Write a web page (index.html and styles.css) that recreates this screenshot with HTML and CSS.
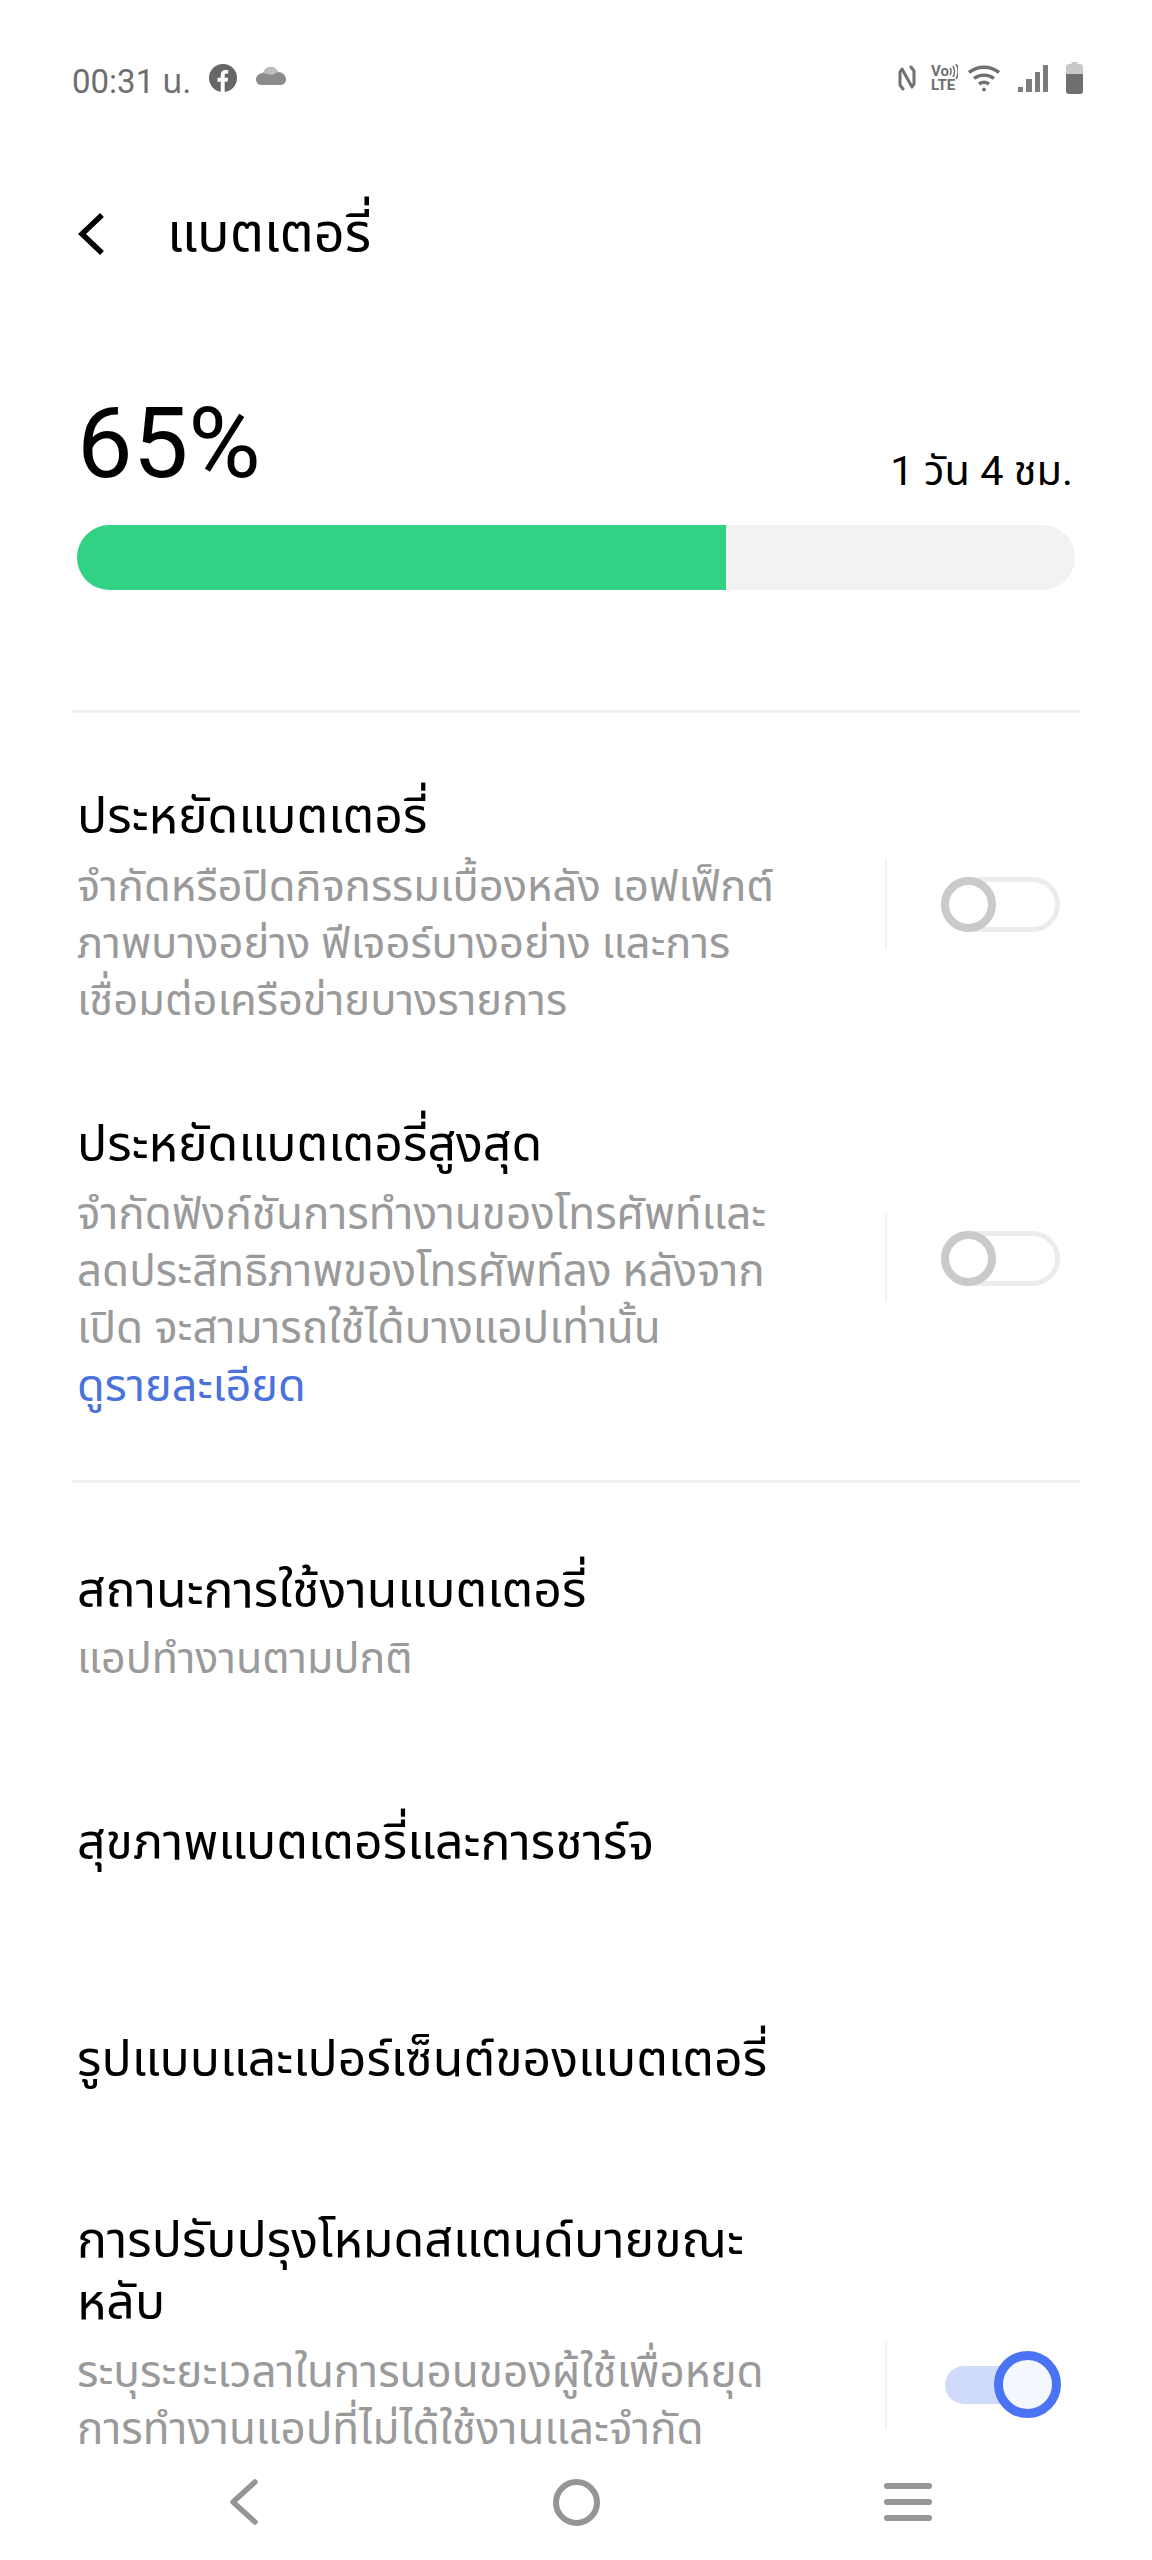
FILE: index.html
```html
<!DOCTYPE html>
<html lang="th">

<head>
    <meta charset="UTF-8">
    <meta name="viewport" content="width=device-width, initial-scale=1.0">
    <title>แบตเตอรี่</title>
    <link rel="stylesheet" href="styles.css">
</head>

<body>
    <div class="screen">
        <div class="status-bar">
            <div class="status-left">
                <span class="clock">00:31 น.</span>
                <svg class="status-fb" width="28" height="28" viewBox="0 0 30 30">
                    <circle cx="15" cy="15" r="15" fill="#666"/>
                    <path d="M12.600 30v-11h-3.500v-4.200h3.500v-3c0-3.500 2.100-5.400 5.200-5.400 1.500 0 2.800.2 2.800.2v3.500h-1.600c-1.700 0-2.200 1-2.200 2.100v2.600h3.700l-.6 4.200h-3.100v11z" fill="#fff"/>
                </svg>
                <svg class="status-cloud" width="30" height="20" viewBox="0 0 30 20">
                    <path d="M7 6c1.500-4 4.500-6 8-6 3.500 0 6 2 7.200 5C26 5 30 8 30 12.500c0 2.500-2 5.500-5 5.500H5c-3 0-5-3-5-5.500C0 9 3 6 7 6z" fill="#8c8c8c"/>
                    <path d="M7 6c1.500-4 4.500-6 8-6 3.500 0 6 2 7.200 5l-6.200 3z" fill="#bdbdbd"/>
                </svg>
            </div>
            <div class="status-right">
                <svg class="icon-nfc" width="18" height="26" viewBox="0 0 18 26" fill="none" stroke="#707070" stroke-width="3" stroke-linejoin="round" stroke-linecap="round">
                    <path d="M5 24 L2 20 V7 L4 4 L14 22 L16 19 V6 L13 2"/>
                </svg>
                <div class="icon-volte">
                    <div class="volte-top">
                        <span>Vo</span>
                        <svg width="9" height="15" viewBox="0 0 9 15" fill="none" stroke="#707070" stroke-width="1.500">
                            <path d="M1 4c1.200 2 1.200 5 0 7M4 2c2 3 2 8 0 11M7 0c2.800 4 2.800 11 0 15"/>
                        </svg>
                    </div>
                    <span>LTE</span>
                </div>
                <svg class="icon-wifi" width="32" height="27" viewBox="0 0 32 27" fill="none" stroke="#707070" stroke-width="3.400">
                    <path d="M1 7.500c8.500-7 21.500-7 30 0"/>
                    <path d="M6 13.500c6-4.500 14-4.500 20 0"/>
                    <path d="M11 19c3-2 7-2 10 0"/>
                    <circle cx="16" cy="24.500" r="1.500" fill="#707070" stroke-width="1"/>
                </svg>
                <svg class="icon-signal" width="30" height="27" viewBox="0 0 30 27" fill="#7c7c7c">
                    <rect x="0" y="22" width="5" height="5"/>
                    <rect x="8" y="14" width="6" height="13"/>
                    <rect x="17" y="7" width="5" height="20"/>
                    <rect x="25" y="0" width="5" height="27"/>
                </svg>
                <svg class="icon-battery" width="17" height="32" viewBox="0 0 17 32">
                    <path d="M5.500 0h6v2H14a3 3 0 0 1 3 3v8H0V5a3 3 0 0 1 3-3h2.500z" fill="#c9c9c9"/>
                    <path d="M0 12h17v17a3 3 0 0 1-3 3H3a3 3 0 0 1-3-3z" fill="#6f6f6f"/>
                </svg>
            </div>
        </div>

        <div class="header">
            <svg class="back" width="30" height="44" viewBox="0 0 30 44" fill="none" stroke="#000" stroke-width="5.500">
                <path d="M26 3 L6 22 L26 41"/>
            </svg>
            <h1>แบตเตอรี่</h1>
        </div>

        <div class="battery">
            <div class="battery-info">
                <span class="percent">65%</span>
                <span class="time-left">1 วัน 4 ชม.</span>
            </div>
            <div class="bar">
                <div class="bar-fill"></div>
            </div>
        </div>

        <div class="divider divider-first"></div>

        <div class="item item-saver">
            <div class="item-text">
                <div class="item-title">ประหยัดแบตเตอรี่</div>
                <div class="item-desc">จำกัดหรือปิดกิจกรรมเบื้องหลัง เอฟเฟ็กต์<br>ภาพบางอย่าง ฟีเจอร์บางอย่าง และการ<br>เชื่อมต่อเครือข่ายบางรายการ</div>
            </div>
            <div class="switch-wrap">
                <div class="switch"><span class="knob"></span></div>
            </div>
        </div>

        <div class="item item-super">
            <div class="item-text">
                <div class="item-title">ประหยัดแบตเตอรี่สูงสุด</div>
                <div class="item-desc">จำกัดฟังก์ชันการทำงานของโทรศัพท์และ<br>ลดประสิทธิภาพของโทรศัพท์ลง หลังจาก<br>เปิด จะสามารถใช้ได้บางแอปเท่านั้น</div>
                <div class="item-link">ดูรายละเอียด</div>
            </div>
            <div class="switch-wrap">
                <div class="switch"><span class="knob"></span></div>
            </div>
        </div>

        <div class="divider divider-second"></div>

        <div class="item item-status">
            <div class="item-text">
                <div class="item-title">สถานะการใช้งานแบตเตอรี่</div>
                <div class="item-desc">แอปทำงานตามปกติ</div>
            </div>
        </div>

        <div class="item item-health">
            <div class="item-title">สุขภาพแบตเตอรี่และการชาร์จ</div>
        </div>

        <div class="item item-format">
            <div class="item-title">รูปแบบและเปอร์เซ็นต์ของแบตเตอรี่</div>
        </div>

        <div class="item item-sleep">
            <div class="item-text">
                <div class="item-title">การปรับปรุงโหมดสแตนด์บายขณะ<br>หลับ</div>
                <div class="item-desc">ระบุระยะเวลาในการนอนของผู้ใช้เพื่อหยุด<br>การทำงานแอปที่ไม่ได้ใช้งานและจำกัด</div>
            </div>
            <div class="switch-wrap switch-wrap-on">
                <div class="switch switch-on"><span class="knob"></span></div>
            </div>
        </div>

        <div class="nav-bar">
            <svg width="32" height="46" viewBox="0 0 32 46" fill="none" stroke="#959595" stroke-width="5.500" stroke-linecap="round" stroke-linejoin="round">
                <path d="M27 3 L5 23 L27 43"/>
            </svg>
            <span class="nav-home"></span>
            <div class="nav-menu">
                <span></span>
                <span></span>
                <span></span>
            </div>
        </div>
    </div>
</body>

</html>
```

FILE: styles.css
```css
* {
    box-sizing: border-box;
}

html,
body {
    margin: 0;
    padding: 0;
    background-color: #fff;
}

.screen {
    position: relative;
    width: 1152px;
    height: 2560px;
    overflow: hidden;
    font-family: Roboto, "Noto Sans Thai", "Noto Sans", sans-serif;
    color: #000;
}

.status-bar {
    display: flex;
    justify-content: space-between;
    height: 40px;
    margin-top: 60px;
    padding: 0 69px 0 72px;
}

.status-left,
.status-right {
    display: flex;
    align-items: center;
}

.clock {
    font-size: 33px;
    color: #6e6e6e;
    margin-right: 18px;
    margin-top: 6px;
}

.status-fb {
    margin-right: 19px;
    margin-top: -4px;
}

.status-cloud {
    margin-top: -6px;
}

.status-right {
    margin-top: -4px;
}

.icon-volte {
    display: flex;
    flex-direction: column;
    width: 27px;
    margin-left: 15px;
    font-size: 15px;
    font-weight: 700;
    line-height: 14px;
    color: #707070;
}

.volte-top {
    display: flex;
    align-items: center;
    height: 14px;
}

.icon-wifi {
    margin-left: 10px;
}

.icon-signal {
    margin-left: 18px;
}

.icon-battery {
    margin-left: 18px;
}

.header {
    display: flex;
    align-items: center;
    height: 60px;
    margin-top: 104px;
    padding-left: 76px;
}

.back {
    margin-right: 61px;
}

h1 {
    margin: 0;
    font-size: 54px;
    font-weight: 400;
}

.battery {
    margin-top: 129px;
    padding: 0 77px;
}

.battery-info {
    display: flex;
    justify-content: space-between;
    align-items: flex-end;
    height: 100px;
}

.percent {
    font-size: 99px;
    line-height: 100px;
}

.time-left {
    font-size: 41.500px;
    margin-right: 2px;
    margin-bottom: -11px;
}

.bar {
    height: 65px;
    margin-top: 32px;
    background-color: #f2f2f2;
    border-radius: 33px;
    overflow: hidden;
}

.bar-fill {
    width: 65%;
    height: 100%;
    background-color: #31d283;
}

.divider {
    height: 3px;
    margin: 0 72px;
    background-color: #f1f1f1;
}

.divider-first {
    margin-top: 120px;
}

.divider-second {
    margin-top: 66px;
}

.item {
    display: flex;
    justify-content: space-between;
    padding: 0 92px 0 77px;
}

.item-text {
    width: 760px;
}

.item-title {
    padding-top: 2px;
    font-size: 50px;
    line-height: 62px;
    white-space: nowrap;
}

.item-desc {
    margin-top: 11px;
    font-size: 44px;
    line-height: 57px;
    color: #9a9a9a;
    white-space: nowrap;
}

.item-saver .item-desc {
    font-size: 43.500px;
}

.item-status .item-desc {
    font-size: 43px;
    margin-top: 9px;
}

.item-link {
    font-size: 45px;
    line-height: 57px;
    color: #4a72dc;
}

.item-saver {
    margin-top: 70px;
}

.item-super {
    margin-top: 82px;
}

.item-status {
    margin-top: 74px;
}

.item-health {
    margin-top: 122px;
}

.item-format {
    margin-top: 153px;
}

.item-sleep {
    margin-top: 117px;
}

.switch-wrap {
    display: flex;
    align-items: center;
    height: 88px;
    padding-left: 54px;
    border-left: 2px solid #f2f2f2;
}

.item-saver .switch-wrap {
    margin-top: 77px;
}

.item-super .switch-wrap {
    margin-top: 103px;
}

.switch-wrap-on {
    margin-top: 134px;
    padding-left: 58px;
}

.switch {
    position: relative;
    width: 119px;
    height: 55px;
    border: 5px solid #ececec;
    border-radius: 28px;
}

.knob {
    position: absolute;
    top: -5px;
    left: -5px;
    width: 55px;
    height: 55px;
    border: 8px solid #cacaca;
    border-radius: 50%;
    background-color: #fff;
}

.switch-on {
    width: 105px;
    height: 38px;
    margin-right: 10px;
    border: none;
    background-color: #d0dafa;
    border-radius: 19px;
}

.switch-on .knob {
    top: -15px;
    left: 49px;
    width: 67px;
    height: 67px;
    border-width: 9px;
    border-color: #4a74f4;
    background-color: #f5f7fe;
}

.nav-bar {
    position: absolute;
    left: 0;
    right: 0;
    bottom: 0;
    height: 112px;
    display: grid;
    grid-template-columns: repeat(3, 332px);
    justify-items: center;
    align-items: center;
    padding: 0 0 4px 78px;
    background-color: #fff;
}

.nav-home {
    width: 47px;
    height: 47px;
    border: 6px solid #959595;
    border-radius: 50%;
}

.nav-menu {
    display: flex;
    flex-direction: column;
    gap: 10px;
    width: 48px;
}

.nav-menu span {
    height: 6px;
    border-radius: 3px;
    background-color: #959595;
}
```
